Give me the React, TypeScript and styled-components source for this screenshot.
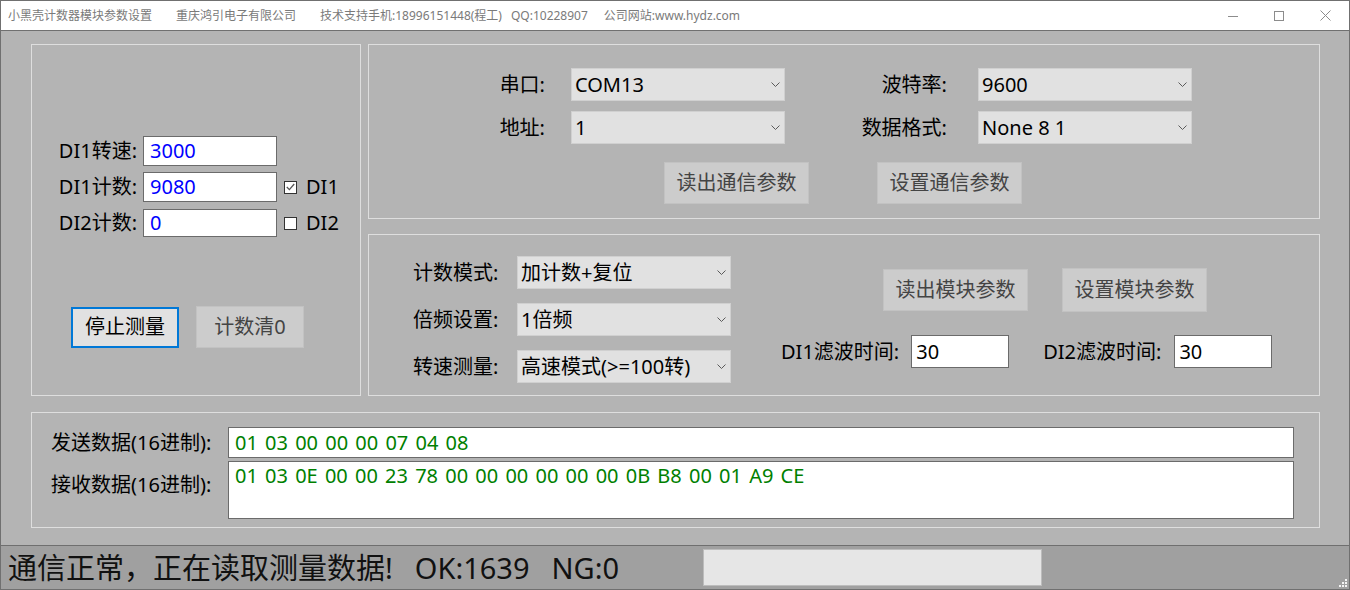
import React from "react";
import styled, { createGlobalStyle } from "styled-components";

const GlobalStyle = createGlobalStyle`
  html, body {
    margin: 0;
    padding: 0;
    background: #ffffff;
  }
  * {
    box-sizing: border-box;
  }
  body {
    font-family: "Noto Sans", "Noto Sans CJK SC", sans-serif;
  }
`;

const Window = styled.div`
  width: 1350px;
  height: 590px;
  border: 1px solid #707070;
  display: flex;
  flex-direction: column;
  background: #b4b4b4;
  overflow: hidden;
`;

/* ---------- title bar ---------- */
const TitleBar = styled.div`
  flex: none;
  height: 30px;
  background: #ffffff;
  border-bottom: 1px solid #707070;
  display: flex;
  align-items: center;
  padding-left: 7px;
  font-size: 12px;
  line-height: 16px;
  color: #7a7a7a;
`;

const TitleItem = styled.span<{ $gap?: number }>`
  margin-left: ${(p) => p.$gap ?? 0}px;
  white-space: nowrap;
`;

const WinControls = styled.div`
  margin-left: auto;
  display: flex;
  height: 100%;
  padding-right: 1px;
`;

const WinButton = styled.div`
  width: 46px;
  height: 100%;
  display: flex;
  align-items: center;
  justify-content: center;
`;

/* ---------- body ---------- */
const Body = styled.div`
  flex: 1;
  padding: 13px 0 0 30px;
  display: flex;
  flex-direction: column;
`;

const TopRegion = styled.div`
  display: flex;
  gap: 7px;
`;

const RightColumn = styled.div`
  display: flex;
  flex-direction: column;
  gap: 15px;
`;

const GroupBox = styled.div<{ $w: number; $h: number }>`
  width: ${(p) => p.$w}px;
  height: ${(p) => p.$h}px;
  border: 1px solid #dedede;
  flex: none;
`;

const Label = styled.span<{ $right?: number }>`
  font-size: 20px;
  line-height: 28px;
  color: #000000;
  white-space: nowrap;
  text-align: ${(p) => (p.$right !== undefined ? "right" : "left")};
  padding-right: ${(p) => p.$right ?? 0}px;
`;

const TextBox = styled.div<{ $w?: number; $h?: number; $color?: string; $pad?: number }>`
  width: ${(p) => (p.$w ? `${p.$w}px` : "100%")};
  height: ${(p) => p.$h ?? 30}px;
  background: #ffffff;
  border: 1px solid #6b6b6b;
  color: ${(p) => p.$color ?? "#000000"};
  font-size: 20px;
  line-height: 28px;
  padding-left: ${(p) => p.$pad ?? 6}px;
  display: flex;
  align-items: center;
  white-space: nowrap;
`;

const ComboBox = styled.div`
  width: 214px;
  height: 33px;
  background: #e1e1e1;
  border: 1px solid #d0d0d0;
  display: flex;
  align-items: center;
  justify-content: space-between;
  padding: 0 4px 0 3px;
  font-size: 20px;
  line-height: 28px;
  color: #000000;
  white-space: nowrap;
`;

const Button = styled.div<{ $w?: number; $h?: number; $focused?: boolean }>`
  width: ${(p) => p.$w ?? 145}px;
  height: ${(p) => p.$h ?? 42}px;
  display: flex;
  align-items: center;
  justify-content: center;
  font-size: 20px;
  line-height: 28px;
  white-space: nowrap;
  background: ${(p) => (p.$focused ? "#e1e1e1" : "#cccccc")};
  border: ${(p) => (p.$focused ? "2px solid #0078d7" : "1px solid #c2c2c2")};
  color: ${(p) => (p.$focused ? "#000000" : "#444444")};
`;

/* ---------- left panel ---------- */
const CounterGrid = styled.div`
  margin: 91px 0 0 25px;
  display: grid;
  grid-template-columns: 80px 134px auto;
  grid-auto-rows: 30px;
  column-gap: 6px;
  row-gap: 6px;
  align-items: center;
`;

const CheckItem = styled.div`
  display: flex;
  align-items: center;
  gap: 9px;
  margin-left: 1px;
  font-size: 20px;
  line-height: 28px;
  color: #000000;
`;

const CheckBox = styled.div`
  width: 13px;
  height: 13px;
  background: #ffffff;
  border: 1px solid #333333;
  display: flex;
  align-items: center;
  justify-content: center;
`;

const LeftButtons = styled.div`
  margin: 68px 0 0 39px;
  display: flex;
  align-items: center;
  gap: 17px;
`;

/* ---------- comm panel ---------- */
const CommGrid = styled.div`
  margin-top: 23px;
  display: grid;
  grid-template-columns: 202px 214px 193px 214px;
  grid-auto-rows: 33px;
  row-gap: 10px;
  align-items: center;
`;

const ButtonRow = styled.div<{ $left: number; $top: number; $gap: number }>`
  margin: ${(p) => p.$top}px 0 0 ${(p) => p.$left}px;
  display: flex;
  align-items: center;
  gap: ${(p) => p.$gap}px;
`;

/* ---------- module panel ---------- */
const ModuleBody = styled.div`
  display: flex;
`;

const ModuleFields = styled.div`
  padding: 21px 0 0 44px;
  display: grid;
  grid-template-columns: 85px 214px;
  grid-auto-rows: 33px;
  column-gap: 19px;
  row-gap: 14px;
  align-items: center;
`;

const ModuleRight = styled.div`
  margin-left: 50px;
  display: flex;
  flex-direction: column;
`;

const FilterRow = styled.div`
  margin-top: 23px;
  display: flex;
  align-items: center;
`;

const FilterField = styled.div<{ $gap: number; $after?: number }>`
  display: flex;
  align-items: center;
  gap: ${(p) => p.$gap}px;
  margin-right: ${(p) => p.$after ?? 0}px;
`;

/* ---------- data panel ---------- */
const DataGrid = styled.div`
  padding: 14px 0 0 19px;
  display: grid;
  grid-template-columns: 177px 1066px;
  grid-template-rows: 31px 58px;
  row-gap: 3px;
`;

const DataLabel = styled(Label)<{ $top?: number }>`
  align-self: ${(p) => (p.$top !== undefined ? "start" : "center")};
  margin-top: ${(p) => p.$top ?? 0}px;
`;

const HexBox = styled.div<{ $multi?: boolean }>`
  background: #ffffff;
  border: 1px solid #6b6b6b;
  color: #008000;
  font-size: 20px;
  line-height: 28px;
  word-spacing: 2px;
  padding: ${(p) => (p.$multi ? "0 0 0 6px" : "0 0 0 6px")};
  display: flex;
  align-items: ${(p) => (p.$multi ? "flex-start" : "center")};
  white-space: nowrap;
`;

/* ---------- status bar ---------- */
const StatusBar = styled.div`
  position: relative;
  flex: none;
  height: 44px;
  border-top: 1px solid #6f6f6f;
  background: #a0a0a0;
  display: flex;
  align-items: center;
`;

const StatusText = styled.div`
  flex: none;
  width: 702px;
  padding-left: 7px;
  font-size: 29px;
  line-height: 36px;
  color: #111111;
  white-space: nowrap;
`;

const StatusPart = styled.span<{ $gap?: number }>`
  margin-left: ${(p) => p.$gap ?? 0}px;
`;

const ProgressBox = styled.div`
  width: 339px;
  height: 37px;
  background: #e6e6e6;
  border: 1px solid #bcbcbc;
`;

const Grip = styled.svg`
  position: absolute;
  right: 1px;
  bottom: 1px;
`;

const Chevron = () => (
  <svg width="9" height="5" viewBox="0 0 9 5">
    <polyline points="0.5,0.5 4.5,4.5 8.5,0.5" fill="none" stroke="#5a5a5a" strokeWidth="1" />
  </svg>
);

const Combo = ({ value }: { value: string }) => (
  <ComboBox>
    <span>{value}</span>
    <Chevron />
  </ComboBox>
);

const Check = ({ checked, label }: { checked?: boolean; label: string }) => (
  <CheckItem>
    <CheckBox>
      {checked && (
        <svg width="9" height="8" viewBox="0 0 9 8">
          <polyline points="0.8,4 3.4,6.6 8.2,1" fill="none" stroke="#555555" strokeWidth="1.3" />
        </svg>
      )}
    </CheckBox>
    <span>{label}</span>
  </CheckItem>
);

export default function App() {
  return (
    <>
      <GlobalStyle />
      <Window>
        <TitleBar>
          <TitleItem>小黑壳计数器模块参数设置</TitleItem>
          <TitleItem $gap={24}>重庆鸿引电子有限公司</TitleItem>
          <TitleItem $gap={24}>技术支持手机:18996151448(程工)</TitleItem>
          <TitleItem $gap={9}>QQ:10228907</TitleItem>
          <TitleItem $gap={16}>公司网站:www.hydz.com</TitleItem>
          <WinControls>
            <WinButton>
              <svg width="10" height="10" viewBox="0 0 10 10">
                <line x1="0" y1="5.5" x2="10" y2="5.5" stroke="#8c8c8c" strokeWidth="1" />
              </svg>
            </WinButton>
            <WinButton>
              <svg width="10" height="10" viewBox="0 0 10 10">
                <rect x="0.5" y="0.5" width="9" height="9" fill="none" stroke="#8c8c8c" strokeWidth="1" />
              </svg>
            </WinButton>
            <WinButton>
              <svg width="11" height="11" viewBox="0 0 11 11">
                <path d="M0.5 0.5 L10.5 10.5 M10.5 0.5 L0.5 10.5" stroke="#8c8c8c" strokeWidth="1" />
              </svg>
            </WinButton>
          </WinControls>
        </TitleBar>

        <Body>
          <TopRegion>
            <GroupBox $w={330} $h={352}>
              <CounterGrid>
                <Label $right={0}>DI1转速:</Label>
                <TextBox $w={134} $color="#0000ff">3000</TextBox>
                <span />
                <Label $right={0}>DI1计数:</Label>
                <TextBox $w={134} $color="#0000ff">9080</TextBox>
                <Check checked label="DI1" />
                <Label $right={0}>DI2计数:</Label>
                <TextBox $w={134} $h={28} $color="#0000ff">0</TextBox>
                <Check label="DI2" />
              </CounterGrid>
              <LeftButtons>
                <Button $w={108} $h={41} $focused>停止测量</Button>
                <Button $w={108} $h={42}>计数清0</Button>
              </LeftButtons>
            </GroupBox>

            <RightColumn>
              <GroupBox $w={952} $h={175}>
                <CommGrid>
                  <Label $right={26}>串口:</Label>
                  <Combo value="COM13" />
                  <Label $right={31}>波特率:</Label>
                  <Combo value="9600" />
                  <Label $right={26}>地址:</Label>
                  <Combo value="1" />
                  <Label $right={31}>数据格式:</Label>
                  <Combo value="None 8 1" />
                </CommGrid>
                <ButtonRow $left={295} $top={18} $gap={68}>
                  <Button>读出通信参数</Button>
                  <Button>设置通信参数</Button>
                </ButtonRow>
              </GroupBox>

              <GroupBox $w={952} $h={162}>
                <ModuleBody>
                  <ModuleFields>
                    <Label>计数模式:</Label>
                    <Combo value="加计数+复位" />
                    <Label>倍频设置:</Label>
                    <Combo value="1倍频" />
                    <Label>转速测量:</Label>
                    <Combo value="高速模式(>=100转)" />
                  </ModuleFields>
                  <ModuleRight>
                    <ButtonRow $left={102} $top={33} $gap={34}>
                      <Button>读出模块参数</Button>
                      <Button $h={44}>设置模块参数</Button>
                    </ButtonRow>
                    <FilterRow>
                      <FilterField $gap={12} $after={34}>
                        <Label>DI1滤波时间:</Label>
                        <TextBox $w={98} $h={33} $pad={4}>30</TextBox>
                      </FilterField>
                      <FilterField $gap={13}>
                        <Label>DI2滤波时间:</Label>
                        <TextBox $w={98} $h={33} $pad={4}>30</TextBox>
                      </FilterField>
                    </FilterRow>
                  </ModuleRight>
                </ModuleBody>
              </GroupBox>
            </RightColumn>
          </TopRegion>

          <GroupBox $w={1289} $h={116} style={{ marginTop: 16 }}>
            <DataGrid>
              <DataLabel>发送数据(16进制):</DataLabel>
              <HexBox>01 03 00 00 00 07 04 08</HexBox>
              <DataLabel $top={10}>接收数据(16进制):</DataLabel>
              <HexBox $multi>01 03 0E 00 00 23 78 00 00 00 00 00 00 0B B8 00 01 A9 CE</HexBox>
            </DataGrid>
          </GroupBox>
        </Body>

        <StatusBar>
          <StatusText>
            <StatusPart>通信正常，正在读取测量数据!</StatusPart>
            <StatusPart $gap={22}>OK:1639</StatusPart>
            <StatusPart $gap={22}>NG:0</StatusPart>
          </StatusText>
          <ProgressBox />
          <Grip width="10" height="10" viewBox="0 0 10 10">
            <rect x="7" y="1" width="2" height="2" fill="#f4f4f4" />
            <rect x="4" y="4" width="2" height="2" fill="#f4f4f4" />
            <rect x="7" y="4" width="2" height="2" fill="#f4f4f4" />
            <rect x="1" y="7" width="2" height="2" fill="#f4f4f4" />
            <rect x="4" y="7" width="2" height="2" fill="#f4f4f4" />
            <rect x="7" y="7" width="2" height="2" fill="#f4f4f4" />
          </Grip>
        </StatusBar>
      </Window>
    </>
  );
}
